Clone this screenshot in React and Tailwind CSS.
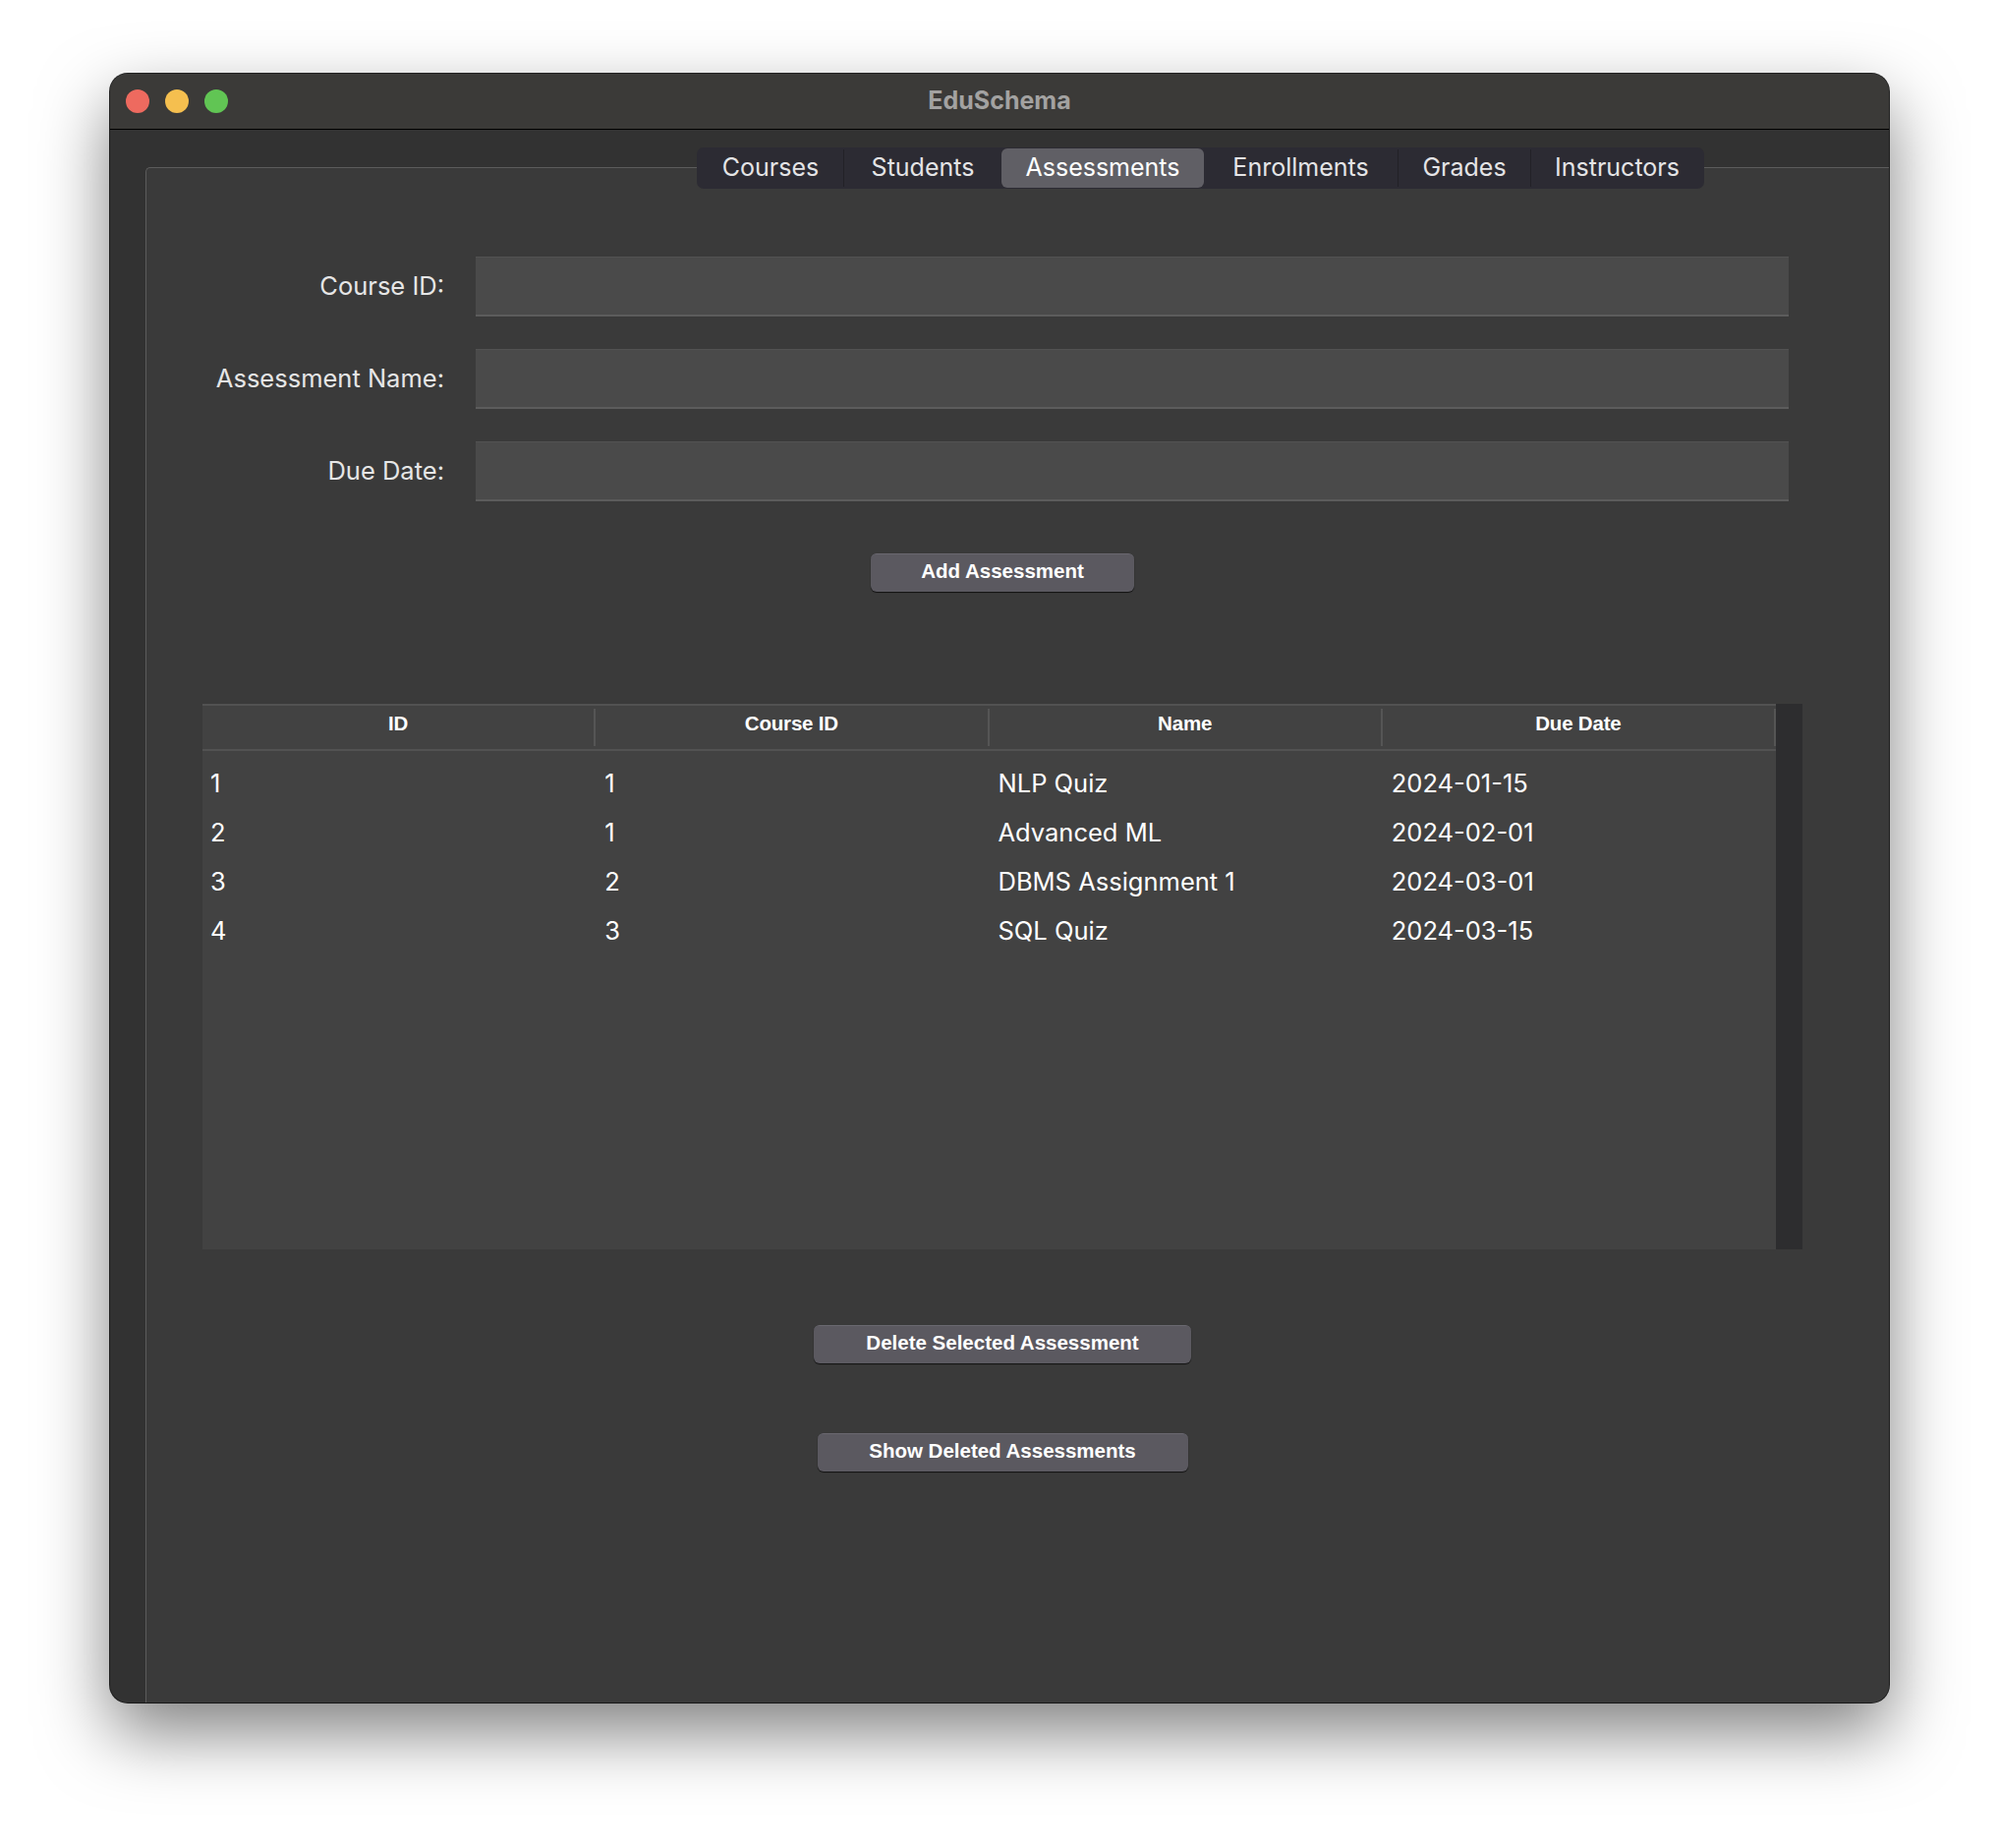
import React from "react";

const tabs = [
  { label: "Courses", width: "w-[148px]" },
  { label: "Students", width: "w-[160px]" },
  { label: "Assessments", width: "w-[206px]", active: true },
  { label: "Enrollments", width: "w-[197px]" },
  { label: "Grades", width: "w-[134px]" },
  { label: "Instructors", width: "w-[175px]" },
];

const fields = ["Course ID:", "Assessment Name:", "Due Date:"];

const columns = ["ID", "Course ID", "Name", "Due Date"];

const assessments = [
  { id: 1, courseId: 1, name: "NLP Quiz", due: "2024-01-15" },
  { id: 2, courseId: 1, name: "Advanced ML", due: "2024-02-01" },
  { id: 3, courseId: 2, name: "DBMS Assignment 1", due: "2024-03-01" },
  { id: 4, courseId: 3, name: "SQL Quiz", due: "2024-03-15" },
];

const ActionButton = ({ children, className = "" }) => (
  <button
    className={`mx-auto flex h-[39px] items-center justify-center rounded-[6px] border-t border-[#6a6870] bg-[#5b5960] pb-[3px] font-['Liberation_Sans',Arial,sans-serif] text-[20.5px] font-bold text-white shadow-[0_1px_1px_rgba(0,0,0,0.7)] ${className}`}
  >
    {children}
  </button>
);

const App = () => {
  return (
    <div className="min-h-[1880px] w-[2034px] bg-white pl-[112px] pt-[75px]">
      <div className="flex h-[1657px] w-[1810px] flex-col overflow-hidden rounded-[18px] bg-[#323232] shadow-[0_0_0_1px_rgba(0,0,0,0.85),0_30px_70px_rgba(0,0,0,0.5)]">
        {/* Title bar */}
        <div className="grid h-[57px] shrink-0 grid-cols-[1fr_auto_1fr] items-center border-b border-black bg-[#3b3a38] px-[16px]">
          <div className="flex items-center gap-[16px]">
            <span className="h-[24px] w-[24px] rounded-full bg-[#ee6a5f]" />
            <span className="h-[24px] w-[24px] rounded-full bg-[#f5bf4f]" />
            <span className="h-[24px] w-[24px] rounded-full bg-[#61c554]" />
          </div>
          <div className="font-['Inter',sans-serif] text-[25px] font-bold text-[#a3a2a1]">
            EduSchema
          </div>
          <div />
        </div>

        <div className="flex flex-1 pl-[36px] pt-[38px]">
          <div className="flex flex-1 flex-col rounded-tl-[5px] border-l border-t border-[#5c5c5c] bg-[#3a3a3a] font-['Inter',sans-serif]">
            {/* Tabs */}
            <div className="-mt-[21px] ml-[560px] flex h-[42px] w-fit items-stretch rounded-[7px] bg-[#2c2b33] p-[1px]">
              {tabs.map((tab, i) => (
                <div key={tab.label} className="flex items-stretch">
                  {i > 0 && !tab.active && !tabs[i - 1].active && (
                    <span className="my-[1px] w-[1px] bg-[#222127]" />
                  )}
                  <div
                    className={`flex items-center justify-center text-[25px] ${tab.width} ${
                      tab.active
                        ? "rounded-[6px] bg-[#605f65] text-white"
                        : "text-[#e4e4e6]"
                    }`}
                  >
                    {tab.label}
                  </div>
                </div>
              ))}
            </div>

            {/* Form */}
            <div className="mt-[69px] grid grid-cols-[303px_1336px] items-center gap-x-[32px] gap-y-[33px]">
              {fields.map((field) => (
                <React.Fragment key={field}>
                  <label className="text-right text-[25.5px] text-[#e6e6e6]">{field}</label>
                  <div className="h-[61px] border-b-2 border-t border-b-[#5c5c5c] border-t-[#525252] bg-[#4a4a4a]" />
                </React.Fragment>
              ))}
            </div>

            <div className="ml-[57px] flex w-[1628px] flex-col">
              <ActionButton className="mt-[53px] w-[268px]">Add Assessment</ActionButton>

              {/* Table */}
              <div className="mt-[114px] flex h-[555px]">
                <div className="w-[1601px] bg-[#424242]">
                  <div className="grid h-[48px] grid-cols-4 border-b-2 border-t-2 border-[#525252]">
                    {columns.map((col) => (
                      <div key={col} className="flex items-center">
                        <span className="flex-1 pb-[8px] text-center font-['Liberation_Sans',Arial,sans-serif] text-[20.5px] font-bold tracking-[-0.2px] text-white">
                          {col}
                        </span>
                        <span className="h-[38px] w-[2px] bg-[#555555]" />
                      </div>
                    ))}
                  </div>
                  <div className="pt-[8px]">
                    {assessments.map((row) => (
                      <div key={row.id} className="grid h-[50px] grid-cols-4 items-center text-[25.5px] text-white">
                        <span className="pl-[8px]">{row.id}</span>
                        <span className="pl-[9px]">{row.courseId}</span>
                        <span className="pl-[9px]">{row.name}</span>
                        <span className="pl-[9px]">{row.due}</span>
                      </div>
                    ))}
                  </div>
                </div>
                <div className="w-[27px] bg-[#2d2d2f]" />
              </div>

              <ActionButton className="mt-[77px] w-[384px]">Delete Selected Assessment</ActionButton>
              <ActionButton className="mt-[71px] w-[377px]">Show Deleted Assessments</ActionButton>
            </div>
          </div>
        </div>
      </div>
    </div>
  );
};

export default App;
